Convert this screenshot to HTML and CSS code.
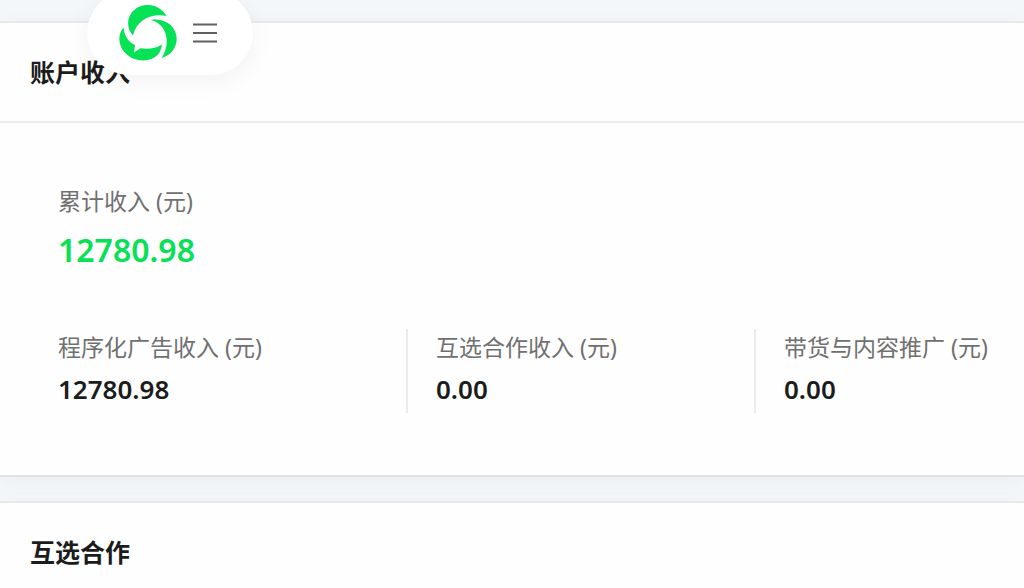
FILE: index.html
```html
<!DOCTYPE html>
<html lang="zh-CN">
<head>
<meta charset="utf-8">
<meta name="viewport" content="width=device-width, initial-scale=1">
<title>账户收入</title>
<link rel="stylesheet" href="styles.css">
</head>
<body>
<nav class="floating-nav" aria-label="主导航">
  <a class="logo" href="#" aria-label="首页">
    <svg viewBox="0 0 58 56" width="58" height="56" aria-hidden="true">
      <path d="M14 30.500C8 24.500 7.500 14.500 12.500 8C19.500-1.500 34-2.500 43 5.500C45 7.200 46.400 9 47.500 11C33 8 17.500 14.500 14 30.500Z"/>
      <path d="M32 15C43 13 54 18.500 57 29C59.800 39.500 53.500 50 42.500 53C51.500 40 49.500 19.500 32 15Z"/>
      <path d="M4.500 22.500C5.500 31 9.500 37 16 40L15 47.500L21.500 43.200C29 44.300 37 43.500 42.800 39.500C42.500 48 36.500 53.500 28.500 55C15 57.500 2 48.500 .500 36C-.200 31 1.500 26 4.500 22.500Z"/>
    </svg>
  </a>
  <button class="menu" type="button" aria-label="菜单">
    <svg viewBox="0 0 24 20" width="24" height="20" aria-hidden="true"><path d="M0 1.500H24M0 10H24M0 18.500H24"/></svg>
  </button>
</nav>
<main class="page">
  <section class="card">
    <h2 class="card-title">账户收入</h2>
    <div class="income">
      <dl class="total">
        <dt class="label">累计收入 (元)</dt>
        <dd class="total-value">12780.98</dd>
      </dl>
      <div class="breakdown">
        <dl class="item">
          <dt class="label">程序化广告收入 (元)</dt>
          <dd class="value">12780.98</dd>
        </dl>
        <dl class="item">
          <dt class="label">互选合作收入 (元)</dt>
          <dd class="value">0.00</dd>
        </dl>
        <dl class="item">
          <dt class="label">带货与内容推广 (元)</dt>
          <dd class="value">0.00</dd>
        </dl>
      </div>
    </div>
  </section>
  <section class="card">
    <h2 class="card-title">互选合作</h2>
  </section>
</main>
</body>
</html>
```
FILE: styles.css
```css
* {
  box-sizing: border-box;
}

body {
  margin: 0;
  overflow: hidden;
  background: #f3f7f9;
  color: #1c1c1c;
  font-family: "Noto Sans", "Noto Sans CJK SC", sans-serif;
}

h2, dl, dd {
  margin: 0;
}

.page {
  display: flex;
  flex-direction: column;
  gap: 24px;
  padding-top: 21px;
}

.card {
  background: #fefefe;
  border-top: 2px solid #e6e9ea;
  border-bottom: 2px solid #e1e4e5;
  box-shadow: 0 4px 20px rgba(0, 0, 0, 0.04);
}

.card-title {
  padding: 30px;
  border-bottom: 2px solid #ededed;
  font-size: 25px;
  font-weight: 700;
  line-height: 38px;
}

.income {
  padding: 60px 0 62px 58px;
}

.label {
  color: #707070;
  font-size: 23px;
  line-height: 36px;
  white-space: nowrap;
}

.total-value {
  color: #07e155;
  font-size: 32px;
  font-weight: 600;
  line-height: 62px;
}

.breakdown {
  display: grid;
  grid-template-columns: 348fr 348fr 270fr;
  margin-top: 48px;
}

.item + .item {
  padding-left: 28px;
  border-left: 2px solid #ebebeb;
}

.value {
  font-size: 26px;
  font-weight: 600;
  line-height: 48px;
}

.floating-nav {
  position: absolute;
  top: -9px;
  left: 87px;
  z-index: 1;
  display: flex;
  align-items: center;
  gap: 16px;
  padding: 14px 36px 14px 32px;
  border-radius: 42px;
  background: #fff;
  box-shadow: 0 6px 24px rgba(0, 0, 0, 0.05);
}

.logo svg,
.menu svg {
  display: block;
}

.logo {
  fill: #07e155;
}

.menu {
  padding: 0;
  border: 0;
  background: none;
  fill: none;
  stroke: #606060;
  stroke-width: 2;
}
```
